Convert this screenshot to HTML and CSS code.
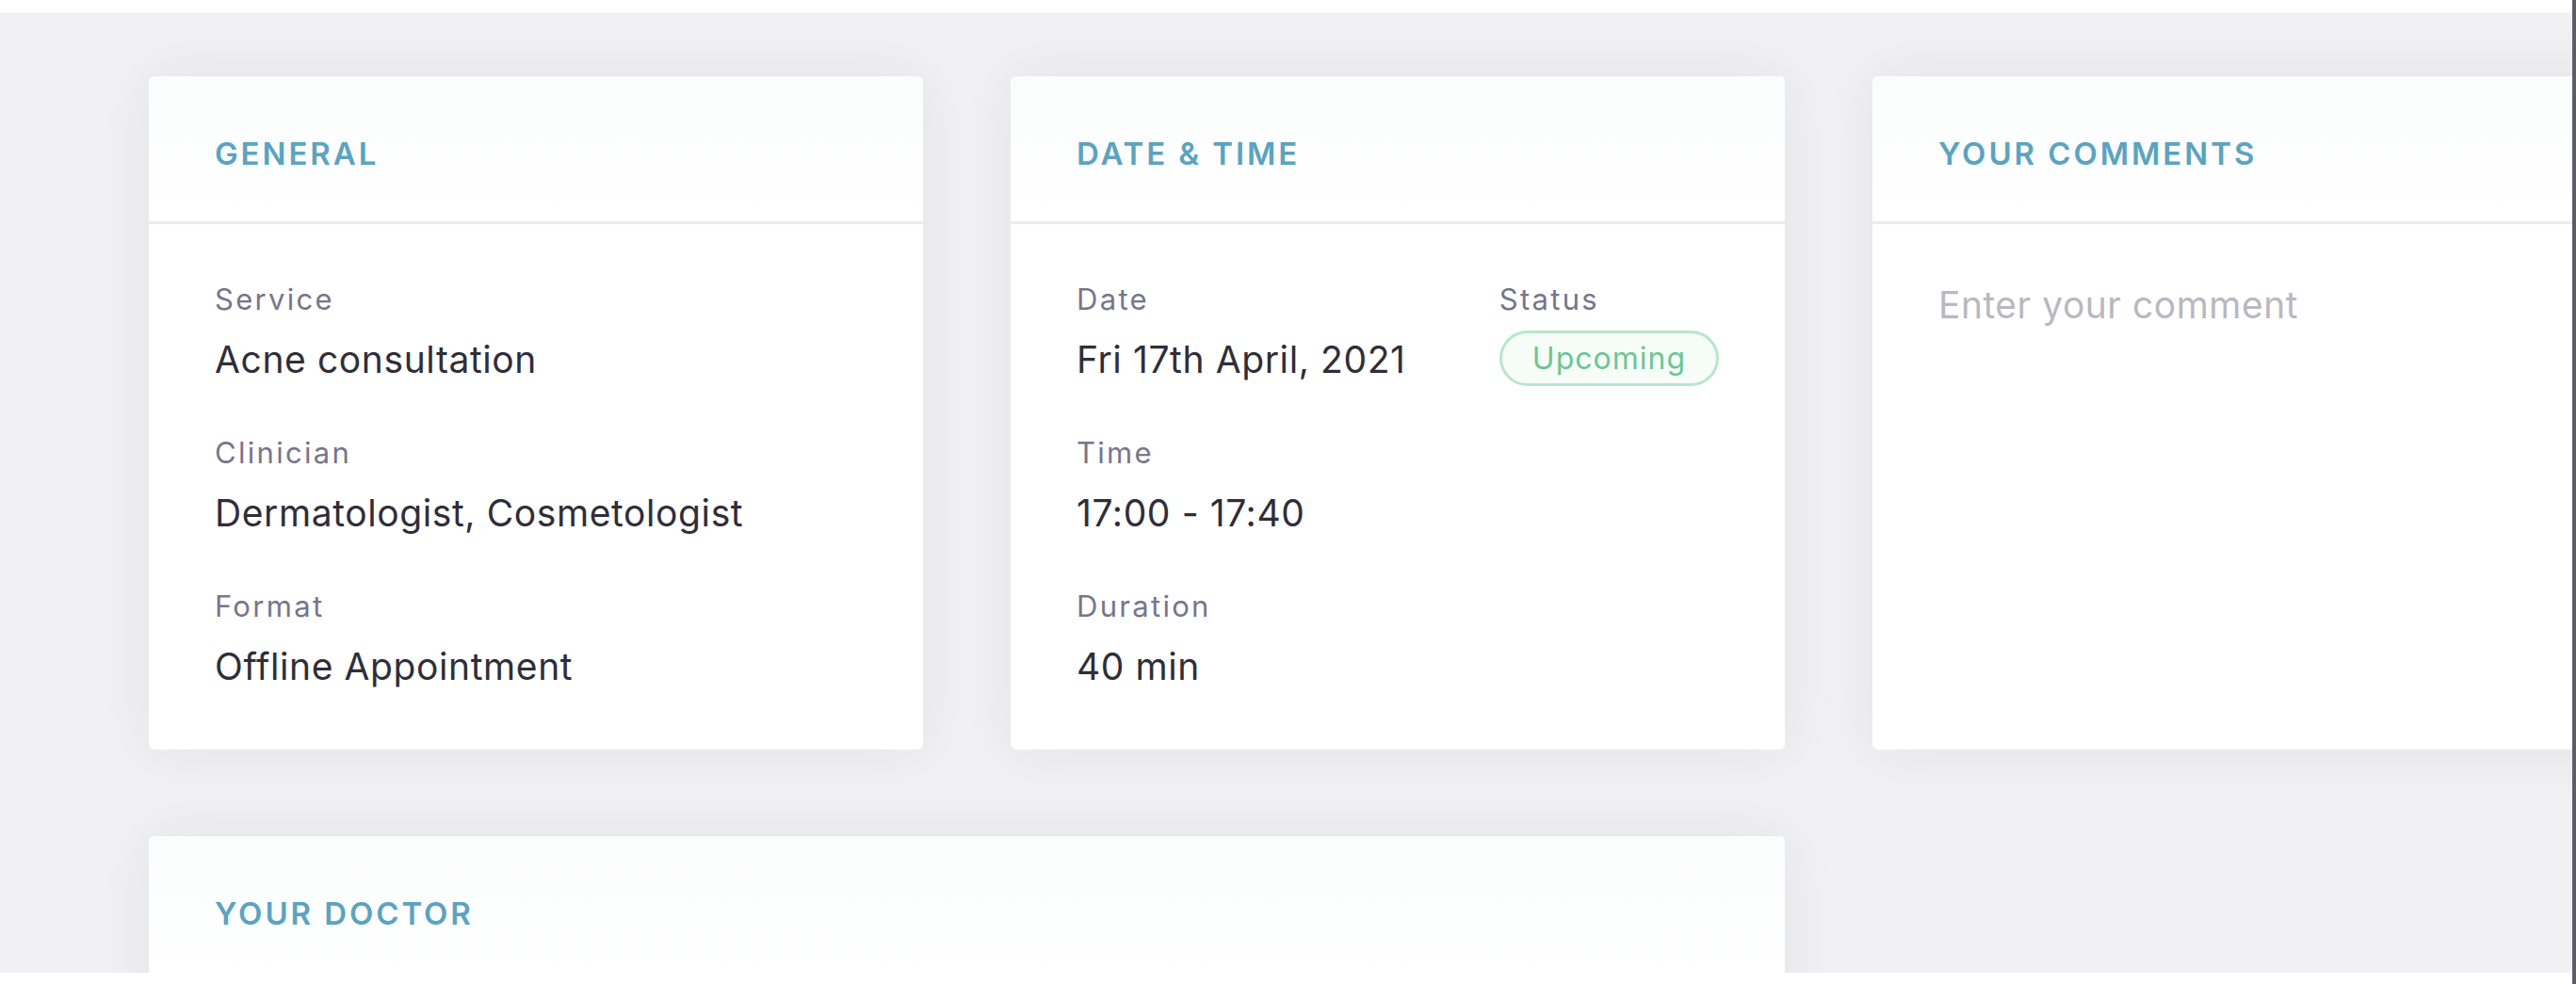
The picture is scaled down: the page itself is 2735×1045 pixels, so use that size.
FILE: index.html
```html
<!DOCTYPE html>
<html lang="en">
<head>
<meta charset="utf-8">
<title>Appointment details</title>
<link rel="stylesheet" href="styles.css">
</head>
<body>
<div class="screen">
  <div class="main-col">
    <main class="panel">
      <div class="grid">
        <section class="card">
          <header class="card-head"><h2>General</h2></header>
          <div class="card-body">
            <div class="field">
              <div class="label">Service</div>
              <div class="value">Acne consultation</div>
            </div>
            <div class="field">
              <div class="label">Clinician</div>
              <div class="value">Dermatologist, Cosmetologist</div>
            </div>
            <div class="field">
              <div class="label">Format</div>
              <div class="value">Offline Appointment</div>
            </div>
          </div>
        </section>

        <section class="card">
          <header class="card-head"><h2>Date &amp; Time</h2></header>
          <div class="card-body">
            <div class="field field-row">
              <div class="sub-field">
                <div class="label">Date</div>
                <div class="value">Fri 17th April, 2021</div>
              </div>
              <div class="sub-field">
                <div class="label">Status</div>
                <div class="badge">Upcoming</div>
              </div>
            </div>
            <div class="field">
              <div class="label">Time</div>
              <div class="value">17:00 - 17:40</div>
            </div>
            <div class="field">
              <div class="label">Duration</div>
              <div class="value">40 min</div>
            </div>
          </div>
        </section>

        <section class="card card-comments">
          <header class="card-head"><h2>Your Comments</h2></header>
          <div class="card-body">
            <div class="comment-input">Enter your comment</div>
          </div>
        </section>

        <section class="card card-wide">
          <header class="card-head"><h2>Your Doctor</h2></header>
        </section>
      </div>
    </main>
  </div>
  <div class="edge"></div>
</div>
</body>
</html>
```
FILE: styles.css
```css
html, body {
  margin: 0;
  padding: 0;
  height: 100%;
}

body {
  background: #ffffff;
  font-family: Inter, "Open Sans", "Liberation Sans", sans-serif;
  overflow: hidden;
}

.screen {
  display: flex;
  height: 1045px;
}

.main-col {
  flex: 1;
  min-width: 0;
  padding-top: 13px;
}

.panel {
  display: block;
  height: 1020px;
  box-sizing: border-box;
  background: #f1f1f3;
  overflow: hidden;
  padding: 68px 0 0 158px;
}

.edge {
  width: 4px;
  flex: none;
  background: #5d5c69;
}

.grid {
  display: grid;
  grid-template-columns: repeat(3, 822px);
  column-gap: 93px;
  row-gap: 92px;
}

.card {
  background: #ffffff;
  border-radius: 6px;
  height: 715px;
  box-shadow: 0 0 60px rgba(40, 40, 80, 0.07);
}

.card-wide {
  grid-column: 1 / span 2;
  height: 400px;
}

.card-head {
  padding: 62px 70px 52px;
  border-bottom: 3px solid #ececf0;
  border-radius: 6px 6px 0 0;
  background: linear-gradient(#fbfcfc, #ffffff);
}

.card-head h2 {
  margin: 0;
  font-size: 33px;
  line-height: 40px;
  font-weight: 600;
  color: #5ba3c1;
  text-transform: uppercase;
  letter-spacing: 2.9px;
}

.card-body {
  padding: 62px 70px 0;
}

.field + .field {
  margin-top: 57px;
}

.field-row {
  display: flex;
  justify-content: space-between;
}

.label {
  font-size: 31px;
  line-height: 36px;
  color: #77758b;
  letter-spacing: 2.3px;
}

.value {
  margin-top: 22px;
  font-size: 39px;
  line-height: 48px;
  color: #2f2e39;
  letter-spacing: 0.6px;
}

.badge {
  margin-top: 15px;
  margin-bottom: -8px;
  height: 59px;
  box-sizing: border-box;
  display: inline-flex;
  align-items: center;
  padding: 0 32px;
  border: 3px solid #b8e6cb;
  border-radius: 30px;
  background: #f6fcf8;
  color: #6cc691;
  font-size: 32px;
  letter-spacing: 1px;
}

.comment-input {
  font-size: 39px;
  line-height: 48px;
  color: #b9b8c1;
  letter-spacing: 0.5px;
}
```
